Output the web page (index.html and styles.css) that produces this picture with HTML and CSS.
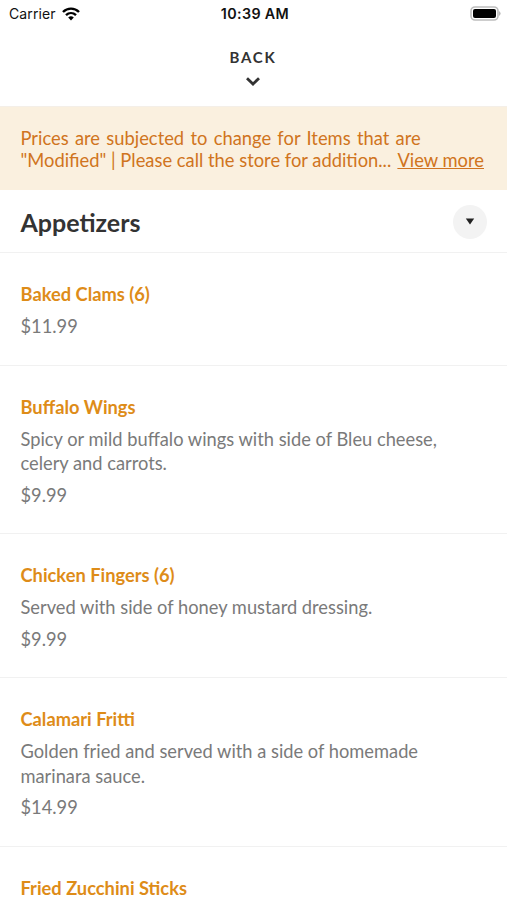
FILE: index.html
```html
<!DOCTYPE html>
<html lang="en">
<head>
<meta charset="utf-8">
<title>Menu</title>
<link rel="stylesheet" href="styles.css">
</head>
<body>
<div class="status">
  <div class="carrier"><span>Carrier</span>
    <svg width="18" height="14" viewBox="0 0 18 14" fill="none" stroke="#000" stroke-width="2.4"><path d="M1 5C5.500.500 12.500.500 17 5"/><path d="M4 8.200C6.900 5.400 11.100 5.400 14 8.200"/><path d="M6.200 10.500Q9 8 11.800 10.500L9 13.400Z" fill="#000" stroke="none"/></svg>
  </div>
  <div class="time">10:39 AM</div>
  <svg class="battery" width="31" height="15" viewBox="0 0 31 15"><rect x="1" y="1" width="27" height="13" rx="4" fill="#fff" stroke="#bdbdbd" stroke-width="1.600"/><rect x="3" y="3" width="23" height="9" rx="2"/><path d="M29.200 5q2.600 2.500 0 5z" fill="#aaa"/></svg>
</div>
<header class="back"><span>BACK</span>
  <svg width="14" height="9" viewBox="0 0 14 9" fill="none" stroke="#333" stroke-width="2.800"><path d="M1 1.200L7 7L13 1.200"/></svg>
</header>
<div class="notice"><div class="first">Prices are subjected to change for Items that are</div><div class="row"><span>"Modified" | Please call the store for addition...</span><a>View more</a></div></div>
<div class="section"><h1>Appetizers</h1><div class="toggle"><svg width="10" height="7" viewBox="0 0 10 7"><path d="M.8.500h8.400L5 6.500z" fill="#222"/></svg></div></div>
<main>
<article><h2>Baked Clams (6)</h2><p>$11.99</p></article>
<article><h2>Buffalo Wings</h2><p>Spicy or mild buffalo wings with side of Bleu cheese,<br>celery and carrots.</p><p>$9.99</p></article>
<article><h2>Chicken Fingers (6)</h2><p>Served with side of honey mustard dressing.</p><p>$9.99</p></article>
<article><h2>Calamari Fritti</h2><p>Golden fried and served with a side of homemade<br>marinara sauce.</p><p>$14.99</p></article>
<article><h2>Fried Zucchini Sticks</h2></article>
</main>
</body>
</html>
```
FILE: styles.css
```css
* { box-sizing: border-box; }
html, body { height: 900px; overflow: hidden; }
body { margin: 0; background: #fff; font-family: Lato, sans-serif; color: #333; }
h1, h2, p { margin: 0; }
svg { display: block; }
.status { height: 28px; display: grid; grid-template-columns: 1fr auto 1fr; align-items: center; padding: 0 6px 0 9px; font: 14px/28px Inter, sans-serif; color: #111; }
.carrier { display: flex; align-items: center; gap: 6px; letter-spacing: .1px; }
.time { font-weight: 600; font-size: 14.3px; letter-spacing: .35px; }
.battery { justify-self: end; margin-bottom: 1px; }
.back { height: 78px; padding: 20px 1px 0 0; display: flex; flex-direction: column; align-items: center; gap: 10px; font-size: 15px; line-height: 19px; font-weight: 700; letter-spacing: 1.8px; }
.notice { height: 84px; padding: 20px 20.5px 0; background: #faf0df; border-top: 1px solid #f4efe8; color: #d07420; font-size: 18.35px; line-height: 22px; white-space: nowrap; }
.first { word-spacing: 1.6px; }
.row { display: flex; justify-content: space-between; padding-right: 2.5px; }
.row a { text-decoration: underline; }
.section { height: 63px; padding: 1px 20px 0 20.5px; display: flex; align-items: center; justify-content: space-between; border-bottom: 1px solid #f1f1f1; }
h1 { padding-top: 1px; font-size: 25px; line-height: 34px; font-weight: 700; }
.toggle { width: 34px; height: 34px; border-radius: 50%; background: #f3f3f3; display: grid; place-items: center; }
article { padding: 29px 20.5px 26px; border-bottom: 1px solid #f1f1f1; color: #7a7a7a; font-size: 18.3px; line-height: 24.5px; white-space: nowrap; }
h2 { font-size: 18.3px; line-height: 24px; font-weight: 700; color: #de8c18; }
article p { margin-top: 7px; }
h2 + p { margin-top: 8px; }
article h2 + p { margin-top: 8px; }
```
